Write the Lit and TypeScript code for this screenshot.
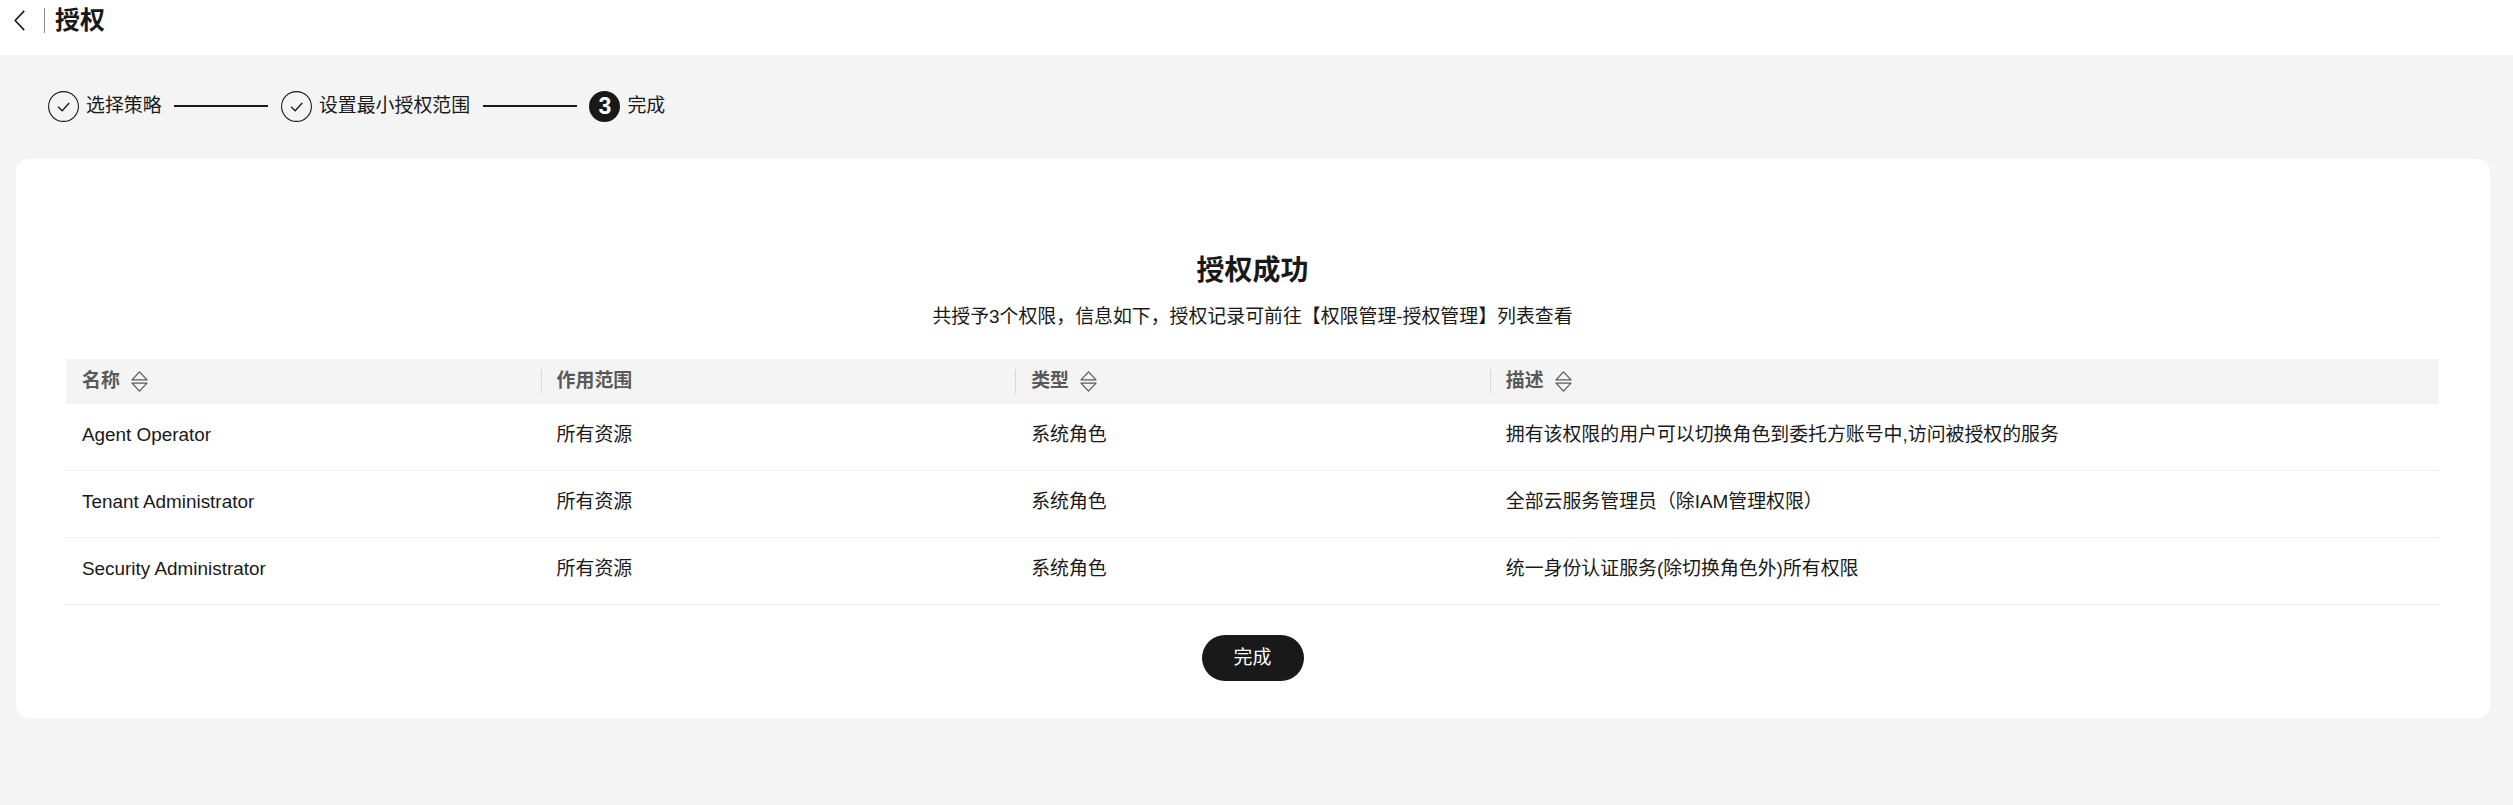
import { LitElement, html, css } from "lit";
import { customElement } from "lit/decorators.js";

const check = html`<svg class="circle" viewBox="0 0 31 31"><circle cx="15.5" cy="15.5" r="14.9" fill="none" stroke="#191919" stroke-width="1.1"/><path d="M10 15.8 L14.2 19.8 L21.2 12" fill="none" stroke="#191919" stroke-width="1.3"/></svg>`;
const sort = html`<svg class="sort" viewBox="0 0 17 21"><path d="M8.5 .8 L16 8.8 H1 Z M1 12.2 H16 L8.5 20.2 Z" fill="none" stroke="#595959" stroke-width="1.2" stroke-linejoin="round"/></svg>`;
const rows = [
  ["Agent Operator", "所有资源", "系统角色", "拥有该权限的用户可以切换角色到委托方账号中,访问被授权的服务"],
  ["Tenant Administrator", "所有资源", "系统角色", "全部云服务管理员（除IAM管理权限）"],
  ["Security Administrator", "所有资源", "系统角色", "统一身份认证服务(除切换角色外)所有权限"],
];

@customElement("app-root")
export class AppRoot extends LitElement {
  static styles = css`
    :host { display: block; min-height: 805px; background: #f4f4f4; color: #191919;
      font-family: "Liberation Sans", "Noto Sans CJK SC", sans-serif; font-size: 18.9px; line-height: 28px; }
    .top { height: 55px; background: #fff; display: flex; align-items: flex-start; padding: 8px 0 0 14px; box-sizing: border-box; }
    .top-inner { display: flex; align-items: center; height: 25px; }
    .back { width: 11px; height: 21px; margin-right: 19px; display: block; }
    .bar { width: 1.4px; height: 25px; background: #8c8c8c; margin-right: 9.5px; }
    .top h1 { margin: 0; font-size: 25px; font-weight: 700; line-height: 25px; }
    .steps { height: 104px; padding-left: 48px; box-sizing: border-box; padding-bottom: 2px; display: flex; align-items: center; }
    .step { display: flex; align-items: center; gap: 7px; }
    .circle { width: 31px; height: 31px; display: block; }
    .num { width: 31px; height: 31px; border-radius: 50%; background: #191919; color: #fff; font-weight: 700; font-size: 23px;
      display: flex; align-items: center; justify-content: center; }
    .line { width: 94px; height: 1.4px; background: #191919; margin: 0 12.7px; }
    .card { margin: 0 23px 0 16px; height: 559px; box-sizing: border-box; background: #fff; border-radius: 13px; padding: 91px 51px 0 50px;
      display: flex; flex-direction: column; align-items: stretch; }
    h2 { margin: 0; text-align: center; font-size: 28px; font-weight: 700; line-height: 42px; }
    .sub { margin: 11px 0 0; text-align: center; }
    .row { display: grid; grid-template-columns: 1fr 1fr 1fr 2fr; }
    .head { margin-top: 28px; height: 45px; box-sizing: border-box; background: #f4f4f4; border-bottom: 1px solid #eee;
      align-items: center; color: #595959; font-weight: 700; }
    .th { display: flex; align-items: center; height: 25px; padding-left: 15px; gap: 11px; border-left: 1px solid #d9d9d9; }
    .th:first-child { border-left: 1px solid transparent; }
    .sort { width: 17px; height: 21px; display: block; }
    .body { height: 67px; box-sizing: border-box; border-bottom: 1px solid #eee; align-items: center; padding-bottom: 4px; }
    .td { padding-left: 16px; }
    .actions { display: flex; justify-content: center; margin-top: 30px; }
    button { width: 102px; height: 45.5px; border: 0; border-radius: 23px; background: #191919; color: #fff; font: inherit; padding: 0; }
  `;
  render() {
    return html`
      <div class="top">
        <div class="top-inner">
          <svg class="back" viewBox="0 0 11 21"><path d="M10.2 .9 L1.2 10.5 L10.2 20.1" fill="none" stroke="#191919" stroke-width="1.6"/></svg>
          <span class="bar"></span>
          <h1>授权</h1>
        </div>
      </div>
      <div class="steps">
        <div class="step">${check}<span>选择策略</span></div>
        <span class="line"></span>
        <div class="step">${check}<span>设置最小授权范围</span></div>
        <span class="line"></span>
        <div class="step"><span class="num">3</span><span>完成</span></div>
      </div>
      <div class="card">
        <h2>授权成功</h2>
        <p class="sub">共授予3个权限，信息如下，授权记录可前往【权限管理-授权管理】列表查看</p>
        <div class="row head">
          <div class="th">名称 ${sort}</div>
          <div class="th">作用范围</div>
          <div class="th">类型 ${sort}</div>
          <div class="th">描述 ${sort}</div>
        </div>
        ${rows.map((r) => html`<div class="row body">${r.map((c) => html`<div class="td">${c}</div>`)}</div>`)}
        <div class="actions"><button>完成</button></div>
      </div>
    `;
  }
}
